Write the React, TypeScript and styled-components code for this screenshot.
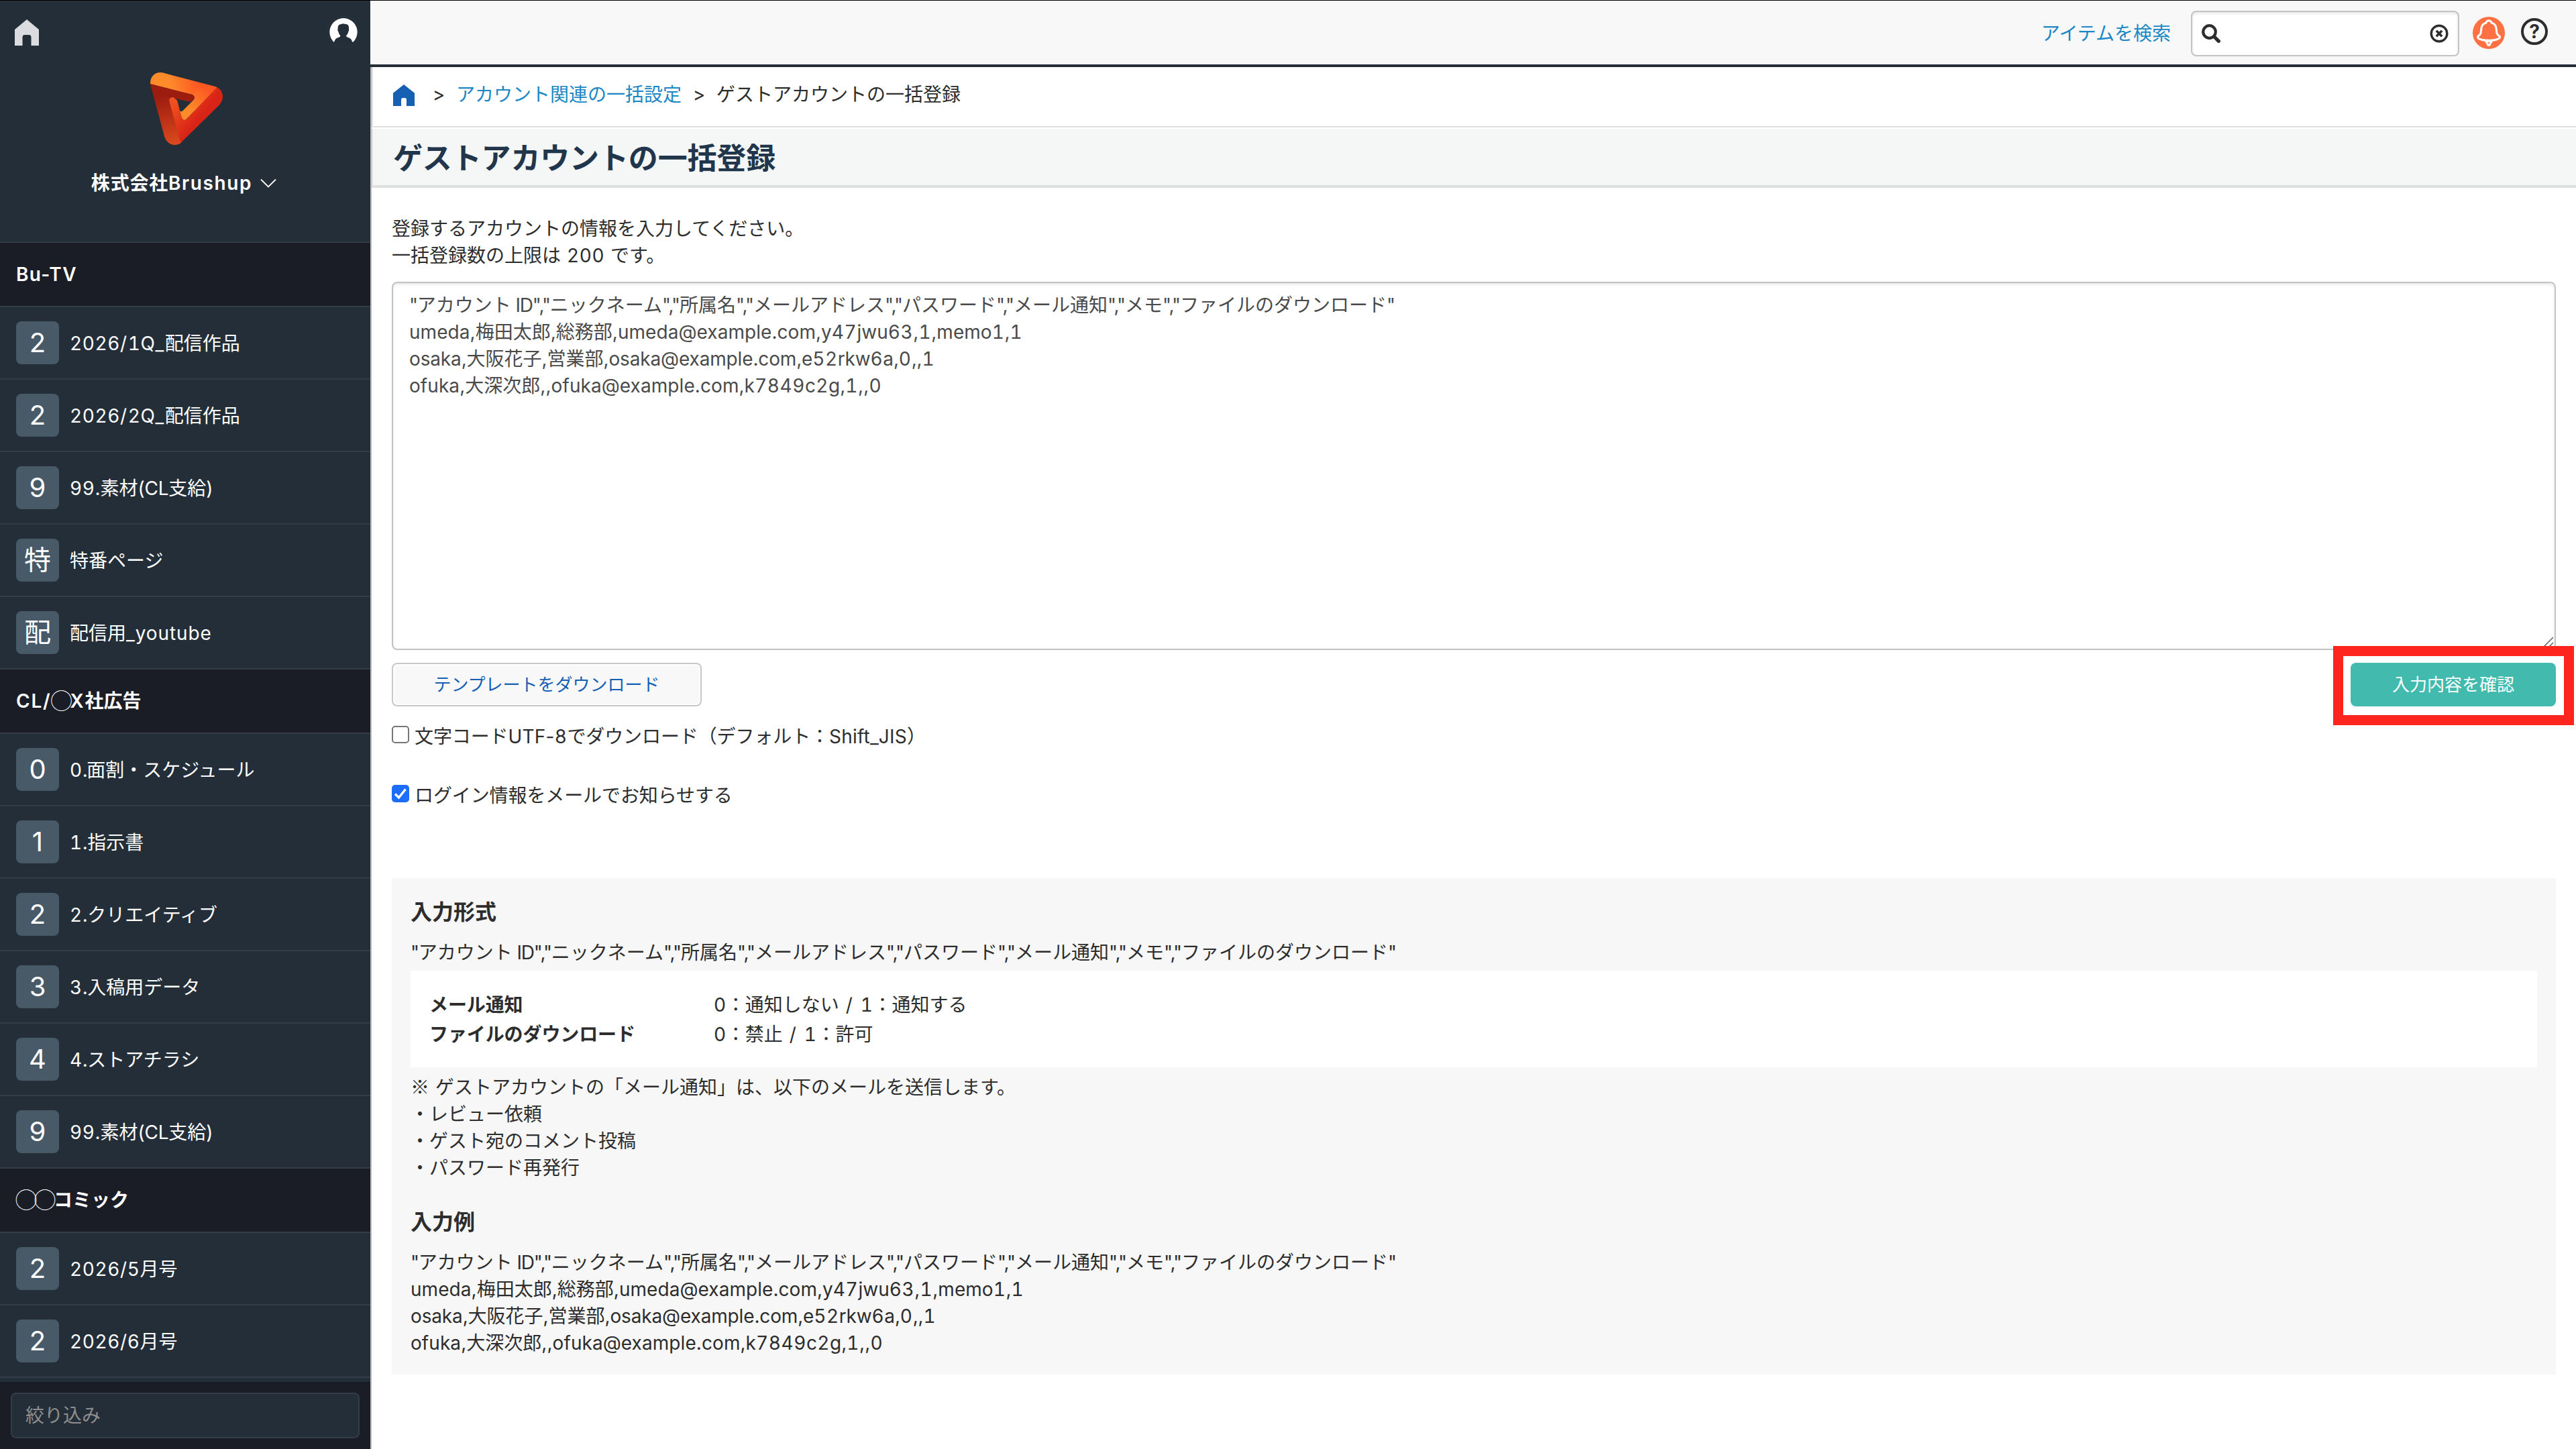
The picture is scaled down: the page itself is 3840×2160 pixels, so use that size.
import React from "react";
import styled, { createGlobalStyle } from "styled-components";

const GlobalStyle = createGlobalStyle`
  *, *::before, *::after { box-sizing: border-box; }
  html, body { margin: 0; padding: 0; overflow: hidden; background: #fff; }
  body {
    font-family: Inter, "Noto Sans CJK JP", sans-serif;
    font-size: 28px;
    line-height: 40px;
    color: #2d2d2d;
  }
`;

const Page = styled.div`
  display: flex;
  width: 3840px;
  height: 2160px;
  border-top: 1px solid #000;
`;

/* ---------- Mixed Japanese / Latin text ---------- */

const Latin = styled.span<{ $tracking: number }>`
  letter-spacing: ${(p) => p.$tracking}px;
`;

const Digits = styled.span`
  font-feature-settings: "tnum";
  letter-spacing: 0.6px;
`;

const Reference = styled.span`
  font-family: "Noto Sans CJK JP", sans-serif;
`;

const Ring = styled.span`
  margin: 0 1.5px 0 -1.5px;
  font-family: "Noto Sans CJK JP", sans-serif;
  font-size: 33px;
  font-weight: 300;
  letter-spacing: -5px;
  line-height: 0;
  vertical-align: -2px;
`;

const renderPart = (part: string, key: number, tracking: number) => {
  if (/^[0-9]/.test(part)) return <Digits key={key}>{part}</Digits>;
  if (part[0] === "◯") return <Ring key={key}>{part}</Ring>;
  if (part[0] === "※") return <Reference key={key}>{part}</Reference>;
  return (
    <Latin key={key} $tracking={tracking}>
      {part}
    </Latin>
  );
};

const Mixed = ({ text, tracking = 0.3 }: { text: string; tracking?: number }) => (
  <span>
    {text
      .split(/([0-9]+|[\x20-\x2f\x3a-\x7e]+|◯+|※)/)
      .map((part, i) => (i % 2 === 0 ? part : renderPart(part, i, tracking)))}
  </span>
);

/* ---------- Sidebar ---------- */

const Sidebar = styled.nav`
  display: flex;
  flex-direction: column;
  flex: none;
  width: 552px;
  background: #242e38;
  color: #fff;
`;

const SidebarHead = styled.div`
  display: flex;
  flex-direction: column;
  align-items: center;
  height: 361px;
  border-bottom: 2px solid #343c48;
`;

const SidebarTop = styled.div`
  display: flex;
  justify-content: space-between;
  align-items: flex-start;
  width: 100%;
  height: 107px;
  padding: 23px 16px 0 20px;
`;

const LogoBox = styled.div`
  display: flex;
  padding-left: 4px;
`;

const Company = styled.div`
  display: flex;
  align-items: center;
  gap: 12px;
  margin-top: 37px;
  padding-right: 4px;
  font-weight: 600;
  letter-spacing: 0.8px;
`;

const SectionTitle = styled.div`
  display: flex;
  align-items: center;
  flex: none;
  height: 96px;
  padding: 0 24px;
  border-bottom: 2px solid #343c48;
  background: #1b1d26;
  font-weight: 600;
`;

const NavRow = styled.div`
  display: flex;
  align-items: center;
  flex: none;
  gap: 16px;
  height: 108px;
  padding: 0 24px;
  border-bottom: 2px solid #343c48;
`;

const NavLabel = styled.span`
  padding-top: 1px;
`;

const Badge = styled.span`
  display: flex;
  align-items: center;
  justify-content: center;
  width: 64px;
  height: 64px;
  border-radius: 8px;
  background: #485a67;
  font-size: 40px;
`;

const SidebarFoot = styled.div`
  margin-top: auto;
  padding: 16px;
  height: 100px;
  background: #1b1d26;
`;

const FilterInput = styled.input`
  display: block;
  width: 520px;
  height: 68px;
  padding: 0 20px;
  border: 2px solid #343c48;
  border-radius: 8px;
  background: #242e38;
  color: #fff;
  font: inherit;
  outline: none;
  &::placeholder { color: #8e8e8e; opacity: 1; }
`;

/* ---------- Main ---------- */

const Main = styled.main`
  display: flex;
  flex-direction: column;
  flex: 1;
  min-width: 0;
`;

const Header = styled.header`
  display: flex;
  align-items: center;
  justify-content: flex-end;
  flex: none;
  height: 99px;
  padding-right: 42px;
  border-bottom: 4px solid #242e38;
  background: #f8f8f8;
`;

const Link = styled.a`
  color: #1b87c4;
  text-decoration: none;
`;

const SearchLink = styled(Link)`
  padding-top: 3px;
`;

const SearchBox = styled.div`
  display: flex;
  align-items: center;
  justify-content: space-between;
  width: 400px;
  height: 68px;
  margin: 2px 20px 0 30px;
  padding: 0 14px 0 14px;
  border: 2px solid #c3c3c3;
  border-radius: 8px;
  background: #fff;
  box-shadow: inset 0 2px 4px rgba(0, 0, 0, 0.1);
`;

const BellBadge = styled.span`
  display: flex;
  width: 48px;
  height: 48px;
  margin-right: 24px;
  border-radius: 50%;
  background: #ff7043;
`;

const HelpIcon = styled.span`
  display: flex;
  align-items: center;
  justify-content: center;
  width: 40px;
  height: 40px;
  margin-bottom: 4px;
  border: 4px solid #2d2d2d;
  border-radius: 50%;
  font-size: 28px;
  font-weight: 700;
  line-height: 32px;
`;

const Content = styled.div`
  flex: 1;
  border-left: 2px solid #b8b8b8;
`;

const Breadcrumb = styled.div`
  display: flex;
  align-items: center;
  height: 90px;
  padding: 0 0 4px 30px;
  border-left: 2px solid #e0e0e0;
  border-bottom: 2px solid #e0e0e0;
`;

const Crumbs = styled.div`
  display: flex;
  padding: 0 0 3px 10px;
`;

const Separator = styled.span`
  display: inline-flex;
  justify-content: center;
  width: 52px;
`;

const TitleBar = styled.h1`
  display: flex;
  align-items: center;
  height: 88px;
  margin: 2px 0 0;
  padding: 3px 0 0 30px;
  border-left: 2px solid #e0e0e0;
  border-bottom: 4px solid #e0e0e0;
  background: #f5f7f7;
  color: #21364b;
  font-size: 44px;
  font-weight: 700;
  letter-spacing: -0.15px;
`;

const Body = styled.div`
  padding: 41px 30px 0;
`;

const Line = styled.div`
  white-space: pre;
`;

const TextArea = styled.div`
  position: relative;
  height: 549px;
  margin-top: 19px;
  padding: 13px 24px;
  border: 2px solid #c3c3c3;
  border-radius: 8px;
  color: #4a4a4a;
  box-shadow: inset 0 2px 4px rgba(0, 0, 0, 0.1);
`;

const Grip = styled.svg`
  position: absolute;
  right: 0;
  bottom: 0;
  width: 20px;
  height: 20px;
`;

const Actions = styled.div`
  display: flex;
  justify-content: space-between;
  margin-top: 19px;
`;

const Button = styled.button<{ $primary?: boolean }>`
  display: block;
  width: ${(p) => (p.$primary ? 306 : 462)}px;
  height: 65px;
  padding: 0;
  border: ${(p) => (p.$primary ? "none" : "2px solid #c8c8c8")};
  border-radius: 8px;
  background: ${(p) => (p.$primary ? "#42bbae" : "#f8f8f8")};
  box-shadow: ${(p) => (p.$primary ? "none" : "inset 0 0 0 2px #fff")};
  color: ${(p) => (p.$primary ? "#fff" : "#1660b4")};
  font-family: inherit;
  font-size: 26px;
  line-height: 40px;
`;

const Highlight = styled.div`
  position: relative;
  &::after {
    content: "";
    position: absolute;
    left: -26px;
    top: -25px;
    width: 359px;
    height: 118px;
    border: 15px solid #fd251d;
  }
`;

const CheckRow = styled.label<{ $top: number }>`
  display: flex;
  align-items: center;
  gap: 8px;
  height: 40px;
  margin-top: ${(p) => p.$top}px;
`;

const CheckLabel = styled.span`
  padding-top: 2px;
  letter-spacing: -0.1px;
`;

const CheckBox = styled.span<{ $checked?: boolean }>`
  display: flex;
  width: 26px;
  height: 26px;
  margin-bottom: 4px;
  border: ${(p) => (p.$checked ? "none" : "2px solid #767676")};
  border-radius: 5px;
  background: ${(p) => (p.$checked ? "#1c6dfb" : "#fff")};
`;

const Panel = styled.section`
  height: 740px;
  margin-top: 104px;
  padding: 31px 28px 0;
  background: #f7f7f7;
`;

const PanelTitle = styled.h2<{ $top?: number }>`
  margin: ${(p) => p.$top ?? 0}px 0 20px;
  font-size: 32px;
  font-weight: 700;
  line-height: 40px;
`;

const Definitions = styled.dl`
  display: grid;
  grid-template-columns: 424px 1fr;
  grid-auto-rows: 44px;
  align-items: center;
  height: 144px;
  margin: 7px 0 8px;
  padding: 29px 28px 27px;
  background: #fff;
`;

const Term = styled.dt`
  font-weight: 700;
  letter-spacing: -0.1px;
`;

const Description = styled.dd`
  margin: 0;
`;

/* ---------- Icons ---------- */

const SideHomeIcon = () => (
  <svg width="40" height="46" viewBox="20 24 40 46">
    <path d="M40 29 L58 44 V68 H46.5 V56 Q46.5 52 43.5 52 H36.5 Q33.5 52 33.5 56 V68 H22 V44 Z" fill="#dadce0" />
  </svg>
);

const CrumbHomeIcon = () => (
  <svg width="32" height="32" viewBox="0 0 32 32">
    <path d="M16 0 L32 12.7 V32 H20 V23 Q20 20 17.5 20 H14.5 Q12 20 12 23 V32 H0 V12.7 Z" fill="#1660b4" />
  </svg>
);

const AvatarIcon = () => (
  <svg width="48" height="48" viewBox="864 43 144 144">
    <circle cx="936" cy="115" r="71" fill="none" stroke="#3a444e" strokeWidth="2" strokeDasharray="7 9" />
    <path
      d="M893 159 A62 62 0 1 1 979 159 L975 158 Q972 142 956 138 Q948 137 948 130 Q955 126 958 112 Q962 108 960 100 Q962 78 944 79 Q936 74 926 79 Q909 80 911 100 Q908 108 913 112 Q915 124 922 130 Q923 137 914 138 Q898 142 895 158 Z"
      fill="#fff"
    />
  </svg>
);

const Logo = () => (
  <svg width="108" height="108" viewBox="72 294 324 324">
    <defs>
      <linearGradient id="logoTop" gradientUnits="userSpaceOnUse" x1="130" y1="370" x2="300" y2="330">
        <stop offset="0.2" stopColor="#fd8b2a" />
        <stop offset="0.9" stopColor="#fe5722" />
      </linearGradient>
      <linearGradient id="logoInner" gradientUnits="userSpaceOnUse" x1="240" y1="470" x2="330" y2="370">
        <stop offset="0.1" stopColor="#fd8b2a" />
        <stop offset="1" stopColor="#fe5722" />
      </linearGradient>
      <linearGradient id="logoLeft" gradientUnits="userSpaceOnUse" x1="120" y1="400" x2="170" y2="610">
        <stop offset="0" stopColor="#9c1c10" />
        <stop offset="1" stopColor="#d9481c" />
      </linearGradient>
      <linearGradient id="logoRight" gradientUnits="userSpaceOnUse" x1="180" y1="430" x2="280" y2="510">
        <stop offset="0" stopColor="#f0501f" />
        <stop offset="1" stopColor="#d82417" />
      </linearGradient>
    </defs>
    <path d="M72 345 Q72 320 86 306 Q101 291 127 295 L366 358 L330 440 L262 394 Z" fill="url(#logoTop)" />
    <path d="M72 345 L262 394 Q273 399 269 413 L246 425 L158 405 L213 606 Q196 621 172 617 Q146 611 136 583 Z" fill="url(#logoLeft)" />
    <path d="M366 358 Q390 368 396 395 Q398 420 380 440 L208 609 L157 421 Q156 403 176 405 L193 420 L205 466 L213 500 L234 504 Z" fill="url(#logoRight)" />
    <path d="M262 394 Q273 402 269 413 L215 467 L205 467 L213 497 Q218 507 227 506 Q232 504 236 500 L370 361 L300 348 Z" fill="url(#logoInner)" />
    <path d="M166 406 Q175 403 182 408 L246 425 L262 418 Q272 410 268 400 Q264 394 256 392 L200 380 L150 395 Z" fill="#9c1c10" />
    <path d="M193 418 Q195 414 203 415 L244 425 Q250 428 246 434 L217 464 Q211 469 206 466 Z" fill="#242e38" />
  </svg>
);

const ChevronIcon = () => (
  <svg width="24" height="14" viewBox="0 0 24 14">
    <path d="M1 1.5 L12 12.5 L23 1.5" fill="none" stroke="#fff" strokeWidth="1.8" />
  </svg>
);

const SearchIcon = () => (
  <svg width="28" height="28" viewBox="0 0 28 28">
    <circle cx="11.5" cy="11.5" r="9.3" fill="none" stroke="#2d2d2d" strokeWidth="4.2" />
    <path d="M18.5 18.5 L25.3 25.3" stroke="#2d2d2d" strokeWidth="5.2" strokeLinecap="round" />
  </svg>
);

const ClearIcon = () => (
  <svg width="28" height="28" viewBox="0 0 28 28">
    <circle cx="14" cy="14" r="11.8" fill="none" stroke="#2d2d2d" strokeWidth="3.4" />
    <path d="M9.8 9.8 L18.2 18.2 M18.2 9.8 L9.8 18.2" stroke="#2d2d2d" strokeWidth="3.6" />
  </svg>
);

const BellIcon = () => (
  <svg width="48" height="48" viewBox="258 72 144 144">
    <path
      d="M330 89 Q320 89 318 99 Q300 103 297 122 L294 146 Q291 153 284 157 Q278 162 283 168 Q296 178 330 178 Q364 178 377 168 Q382 162 376 157 Q369 153 366 146 L363 122 Q360 103 342 99 Q340 89 330 89 Z"
      fill="none"
      stroke="#fff"
      strokeWidth="9"
      strokeLinejoin="round"
    />
    <path d="M311 180 H349 Q346 188 341 191 Q339 204 330 204 Q321 204 319 191 Q314 188 311 180 Z" fill="#fff" />
    <path d="M325 187 H335 Q334 193 330 193 Q326 193 325 187 Z" fill="#ff7043" />
  </svg>
);

const CheckIcon = () => (
  <svg width="26" height="26" viewBox="0 0 26 26">
    <path d="M5 13.5 L10.5 19 L20.5 6.5" fill="none" stroke="#fff" strokeWidth="3.4" />
  </svg>
);

/* ---------- Data ---------- */

type Label = { text: string; tracking?: number };
type Section = { title: Label; items: Label[] };

const sections: Section[] = [
  {
    title: { text: "Bu-TV", tracking: 1.3 },
    items: [
      { text: "2026/1Q_配信作品", tracking: 1.6 },
      { text: "2026/2Q_配信作品", tracking: 1.6 },
      { text: "99.素材(CL支給)", tracking: -0.2 },
      { text: "特番ページ" },
      { text: "配信用_youtube", tracking: 0.9 },
    ],
  },
  {
    title: { text: "CL/◯X社広告", tracking: 1.8 },
    items: [
      { text: "0.面割・スケジュール", tracking: -1.5 },
      { text: "1.指示書", tracking: -0.5 },
      { text: "2.クリエイティブ", tracking: -0.5 },
      { text: "3.入稿用データ", tracking: -0.5 },
      { text: "4.ストアチラシ", tracking: -0.5 },
      { text: "99.素材(CL支給)", tracking: -0.2 },
    ],
  },
  {
    title: { text: "◯◯コミック" },
    items: [
      { text: "2026/5月号", tracking: 0.7 },
      { text: "2026/6月号", tracking: 0.7 },
    ],
  },
];

const csvHeader =
  '"アカウント ID","ニックネーム","所属名","メールアドレス","パスワード","メール通知","メモ","ファイルのダウンロード"';

const csvRows: Label[] = [
  { text: "umeda,梅田太郎,総務部,umeda@example.com,y47jwu63,1,memo1,1", tracking: 0.05 },
  { text: "osaka,大阪花子,営業部,osaka@example.com,e52rkw6a,0,,1", tracking: -0.15 },
  { text: "ofuka,大深次郎,,ofuka@example.com,k7849c2g,1,,0", tracking: 0.07 },
];

const CsvHeader = () => (
  <Line>
    <Mixed text={csvHeader} tracking={-1.2} />
  </Line>
);

const CsvSample = () => (
  <>
    <CsvHeader />
    {csvRows.map((row) => (
      <Line key={row.text}>
        <Mixed text={row.text} tracking={row.tracking} />
      </Line>
    ))}
  </>
);

export default function App() {
  return (
    <>
      <GlobalStyle />
      <Page>
        <Sidebar>
          <SidebarHead>
            <SidebarTop>
              <SideHomeIcon />
              <AvatarIcon />
            </SidebarTop>
            <LogoBox>
              <Logo />
            </LogoBox>
            <Company>
              <Mixed text="株式会社Brushup" tracking={1.6} />
              <ChevronIcon />
            </Company>
          </SidebarHead>
          {sections.map((s) => (
            <React.Fragment key={s.title.text}>
              <SectionTitle>
                <Mixed text={s.title.text} tracking={s.title.tracking} />
              </SectionTitle>
              {s.items.map((item) => (
                <NavRow key={item.text}>
                  <Badge>{item.text[0]}</Badge>
                  <NavLabel>
                    <Mixed text={item.text} tracking={item.tracking} />
                  </NavLabel>
                </NavRow>
              ))}
            </React.Fragment>
          ))}
          <SidebarFoot>
            <FilterInput placeholder="絞り込み" />
          </SidebarFoot>
        </Sidebar>
        <Main>
          <Header>
            <SearchLink>アイテムを検索</SearchLink>
            <SearchBox>
              <SearchIcon />
              <ClearIcon />
            </SearchBox>
            <BellBadge>
              <BellIcon />
            </BellBadge>
            <HelpIcon>?</HelpIcon>
          </Header>
          <Content>
            <Breadcrumb>
              <CrumbHomeIcon />
              <Crumbs>
                <Separator>&gt;</Separator>
                <Link>アカウント関連の一括設定</Link>
                <Separator>&gt;</Separator>
                <span>ゲストアカウントの一括登録</span>
              </Crumbs>
            </Breadcrumb>
            <TitleBar>ゲストアカウントの一括登録</TitleBar>
            <Body>
              <Line>登録するアカウントの情報を入力してください。</Line>
              <Line>
                <Mixed text="一括登録数の上限は 200 です。" tracking={1} />
              </Line>
              <TextArea>
                <CsvSample />
                <Grip viewBox="0 0 20 20">
                  <path d="M3 18 L18 3 M11 18 L18 11" stroke="#6a6a6a" strokeWidth="1.6" />
                </Grip>
              </TextArea>
              <Actions>
                <Button>テンプレートをダウンロード</Button>
                <Highlight>
                  <Button $primary>入力内容を確認</Button>
                </Highlight>
              </Actions>
              <CheckRow $top={24}>
                <CheckBox />
                <CheckLabel>
                  <Mixed text="文字コードUTF-8でダウンロード（デフォルト：Shift_JIS）" tracking={0.2} />
                </CheckLabel>
              </CheckRow>
              <CheckRow $top={48}>
                <CheckBox $checked>
                  <CheckIcon />
                </CheckBox>
                <CheckLabel>ログイン情報をメールでお知らせする</CheckLabel>
              </CheckRow>
              <Panel>
                <PanelTitle>入力形式</PanelTitle>
                <CsvHeader />
                <Definitions>
                  <Term>メール通知</Term>
                  <Description>
                    <Mixed text="0：通知しない / 1：通知する" tracking={2} />
                  </Description>
                  <Term>ファイルのダウンロード</Term>
                  <Description>
                    <Mixed text="0：禁止 / 1：許可" tracking={2} />
                  </Description>
                </Definitions>
                <Line>
                  <Mixed text="※ ゲストアカウントの「メール通知」は、以下のメールを送信します。" tracking={1} />
                </Line>
                <Line>・レビュー依頼</Line>
                <Line>・ゲスト宛のコメント投稿</Line>
                <Line>・パスワード再発行</Line>
                <PanelTitle $top={41}>入力例</PanelTitle>
                <CsvSample />
              </Panel>
            </Body>
          </Content>
        </Main>
      </Page>
    </>
  );
}
